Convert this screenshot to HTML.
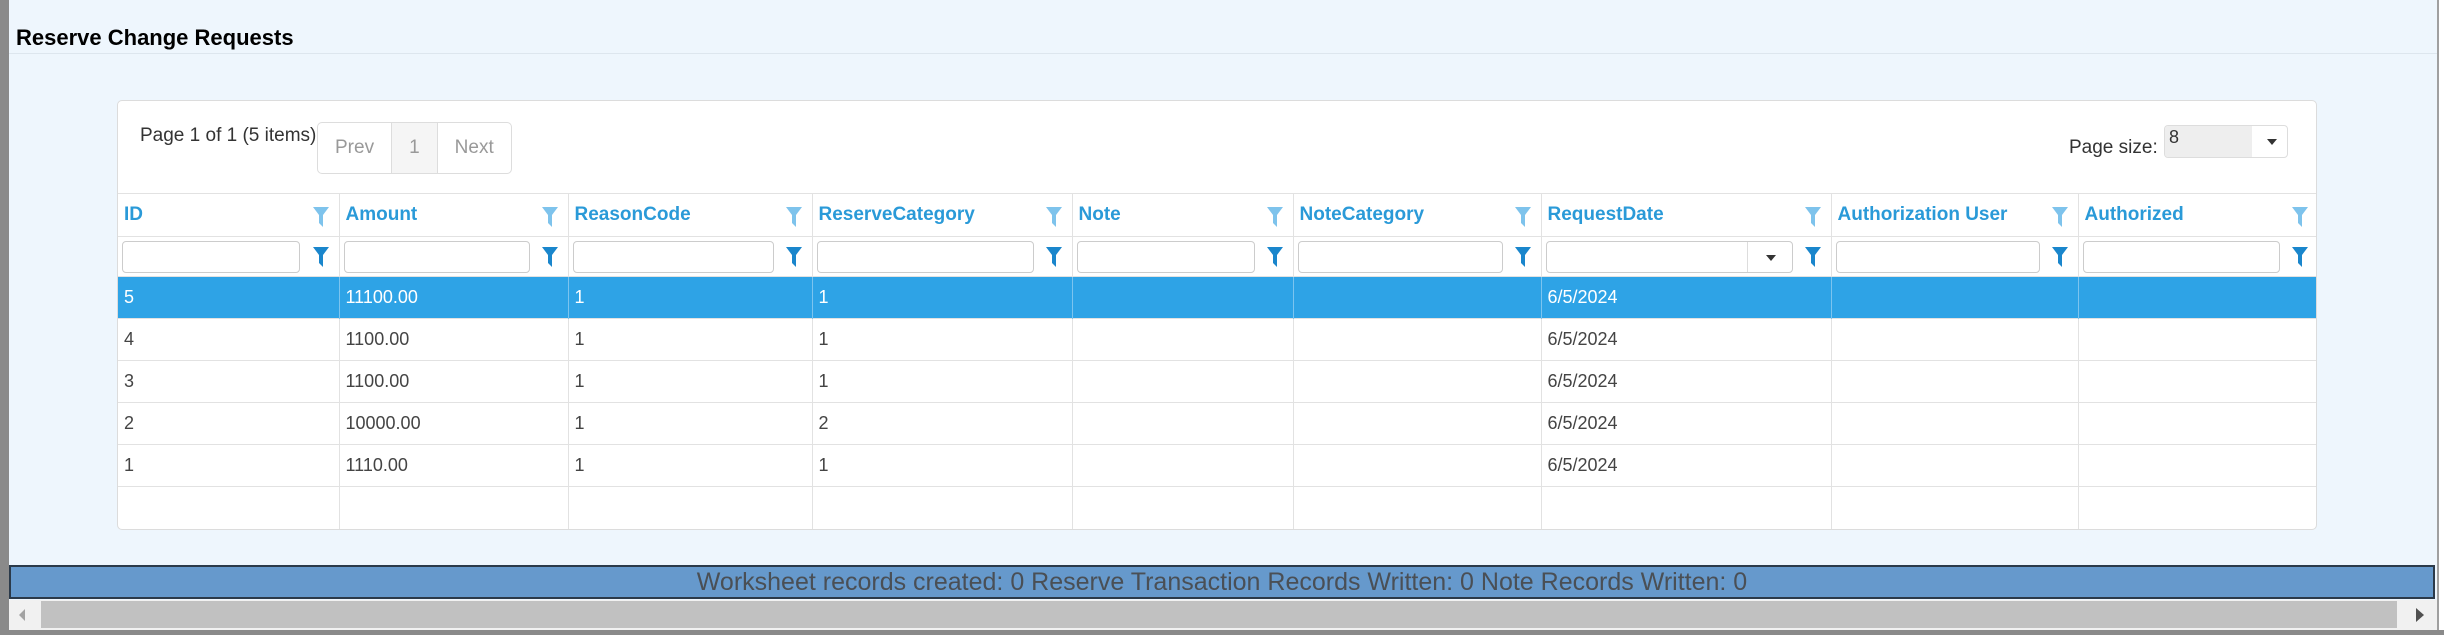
<!DOCTYPE html>
<html><head><meta charset="utf-8"><style>
*{box-sizing:border-box;margin:0;padding:0}
body{width:2444px;height:635px;overflow:hidden;background:#eef6fd;font-family:"Liberation Sans",Arial,sans-serif;position:relative}
.abs{position:absolute}
#lstrip{left:0;top:0;width:9px;height:635px;background:#8a8a8a}
#rstrip{left:2437px;top:0;width:7px;height:635px;background:#fff;border-left:2px solid #a0a0a0}
#title{left:16px;top:25px;font-size:22px;font-weight:bold;color:#000}
#tline{left:9px;top:53px;width:2428px;height:1px;background:#dde6ee}
#grid{left:117px;top:100px;width:2200px;height:430px;background:#fff;border:1px solid #dcdcdc;border-radius:5px;overflow:hidden}
#pinfo{left:22px;top:24px;font-size:19px;color:#333}
#pager{left:199px;top:21px;height:52px;border:1px solid #ddd;border-radius:5px;display:flex;font-size:19px;color:#999;overflow:hidden}
#pager div{display:flex;align-items:center;padding:0 17px;border-right:1px solid #ddd}
#pager div:last-child{border-right:none}
#psize{left:1951px;top:36px;font-size:19px;color:#333}
#psel{left:2046px;top:24px;width:124px;height:33px;border:1px solid #ddd;border-radius:4px;background:#fff;overflow:hidden}
#psel .v{position:absolute;left:0;top:0;width:87px;height:31px;background:#eee;font-size:18px;color:#333;padding:1px 4px}
#psel .a{position:absolute;left:102px;top:13px;border-left:5px solid transparent;border-right:5px solid transparent;border-top:6px solid #333}
table{position:absolute;left:0;top:92px;border-collapse:collapse;table-layout:fixed;width:2200px}
td,th{border-left:1px solid #e2e2e2;border-top:1px solid #e2e2e2;padding:0 6px;position:relative;text-align:left}
td:first-child,th:first-child{border-left:none}
th{height:43px;color:#2a9ad8;font-size:19px;font-weight:bold}
tr.f td{height:40px}
tr.d td{height:42px;font-size:18px;color:#444}
tr.sel td{background:#2ea3e6;color:#fff;border-left-color:#7cc4ef}
.fi{position:absolute;right:10px;width:16px;height:20px}
th .fi{top:13px}
tr.f .fi{top:10px}
.inp{position:absolute;left:4px;top:4px;height:32px;border:1px solid #ccc;border-radius:4px;background:#fff}
#status{left:9px;top:565px;width:2426px;height:34px;background:#6699cc;border:2px solid #2b3a4a;font-size:25px;color:#4a4f55;text-align:center;line-height:30px}
#scroll{left:9px;top:600px;width:2428px;height:30px;background:#f1f1f1}
#thumb{left:32px;top:1px;width:2356px;height:27px;background:#c1c1c1}
#bot{left:0;top:630px;width:2444px;height:5px;background:#8a8a8a}
</style></head><body>
<div class="abs" id="lstrip"></div>
<div class="abs" id="rstrip"></div>
<div class="abs" id="title">Reserve Change Requests</div>
<div class="abs" id="tline"></div>
<div class="abs" id="grid">
 <div class="abs" id="pinfo">Page 1 of 1 (5 items)</div>
 <div class="abs" id="pager"><div>Prev</div><div style="background:#f5f5f5">1</div><div>Next</div></div>
 <div class="abs" id="psize">Page size:</div>
 <div class="abs" id="psel"><div class="v">8</div><div class="a"></div></div>
 <svg width="0" height="0" style="position:absolute"><defs>
  <symbol id="fl" viewBox="0 0 16 20"><path d="M0 0H16L10 8V20L6 16V8Z" fill="#7ec3ec"/></symbol>
  <symbol id="fd" viewBox="0 0 16 20"><path d="M0 0H16L10 8V20L6 16V8Z" fill="#1a86cc"/></symbol>
 </defs></svg>
 <table>
  <colgroup><col style="width:221px"><col style="width:229px"><col style="width:244px"><col style="width:260px"><col style="width:221px"><col style="width:248px"><col style="width:290px"><col style="width:247px"><col style="width:240px"></colgroup>
  <tr><th>ID<svg class="fi"><use href="#fl"/></svg></th><th>Amount<svg class="fi"><use href="#fl"/></svg></th><th>ReasonCode<svg class="fi"><use href="#fl"/></svg></th><th>ReserveCategory<svg class="fi"><use href="#fl"/></svg></th><th>Note<svg class="fi"><use href="#fl"/></svg></th><th>NoteCategory<svg class="fi"><use href="#fl"/></svg></th><th>RequestDate<svg class="fi"><use href="#fl"/></svg></th><th>Authorization User<svg class="fi"><use href="#fl"/></svg></th><th>Authorized<svg class="fi"><use href="#fl"/></svg></th></tr>
  <tr class="f">
   <td><div class="inp" style="width:178px"></div><svg class="fi"><use href="#fd"/></svg></td>
   <td><div class="inp" style="width:186px"></div><svg class="fi"><use href="#fd"/></svg></td>
   <td><div class="inp" style="width:201px"></div><svg class="fi"><use href="#fd"/></svg></td>
   <td><div class="inp" style="width:217px"></div><svg class="fi"><use href="#fd"/></svg></td>
   <td><div class="inp" style="width:178px"></div><svg class="fi"><use href="#fd"/></svg></td>
   <td><div class="inp" style="width:205px"></div><svg class="fi"><use href="#fd"/></svg></td>
   <td><div class="inp" style="width:247px"><div style="position:absolute;left:200px;top:0;width:1px;height:30px;background:#ddd"></div><div style="position:absolute;left:219px;top:13px;border-left:5px solid transparent;border-right:5px solid transparent;border-top:6px solid #333"></div></div><svg class="fi"><use href="#fd"/></svg></td>
   <td><div class="inp" style="width:204px"></div><svg class="fi"><use href="#fd"/></svg></td>
   <td><div class="inp" style="width:197px"></div><svg class="fi"><use href="#fd"/></svg></td>
  </tr>
  <tr class="d sel"><td>5</td><td>11100.00</td><td>1</td><td>1</td><td></td><td></td><td>6/5/2024</td><td></td><td></td></tr>
  <tr class="d"><td>4</td><td>1100.00</td><td>1</td><td>1</td><td></td><td></td><td>6/5/2024</td><td></td><td></td></tr>
  <tr class="d"><td>3</td><td>1100.00</td><td>1</td><td>1</td><td></td><td></td><td>6/5/2024</td><td></td><td></td></tr>
  <tr class="d"><td>2</td><td>10000.00</td><td>1</td><td>2</td><td></td><td></td><td>6/5/2024</td><td></td><td></td></tr>
  <tr class="d"><td>1</td><td>1110.00</td><td>1</td><td>1</td><td></td><td></td><td>6/5/2024</td><td></td><td></td></tr>
  <tr class="d"><td></td><td></td><td></td><td></td><td></td><td></td><td></td><td></td><td></td></tr>
 </table>
</div>
<div class="abs" id="status">Worksheet records created: 0 Reserve Transaction Records Written: 0 Note Records Written: 0</div>
<div class="abs" id="scroll"><div class="abs" id="thumb"></div>
 <div class="abs" style="left:10px;top:9px;border-top:6px solid transparent;border-bottom:6px solid transparent;border-right:6px solid #a3a3a3"></div>
 <div class="abs" style="left:2407px;top:8px;border-top:7px solid transparent;border-bottom:7px solid transparent;border-left:8px solid #505050"></div>
</div>
<div class="abs" id="bot"></div>
</body></html>
